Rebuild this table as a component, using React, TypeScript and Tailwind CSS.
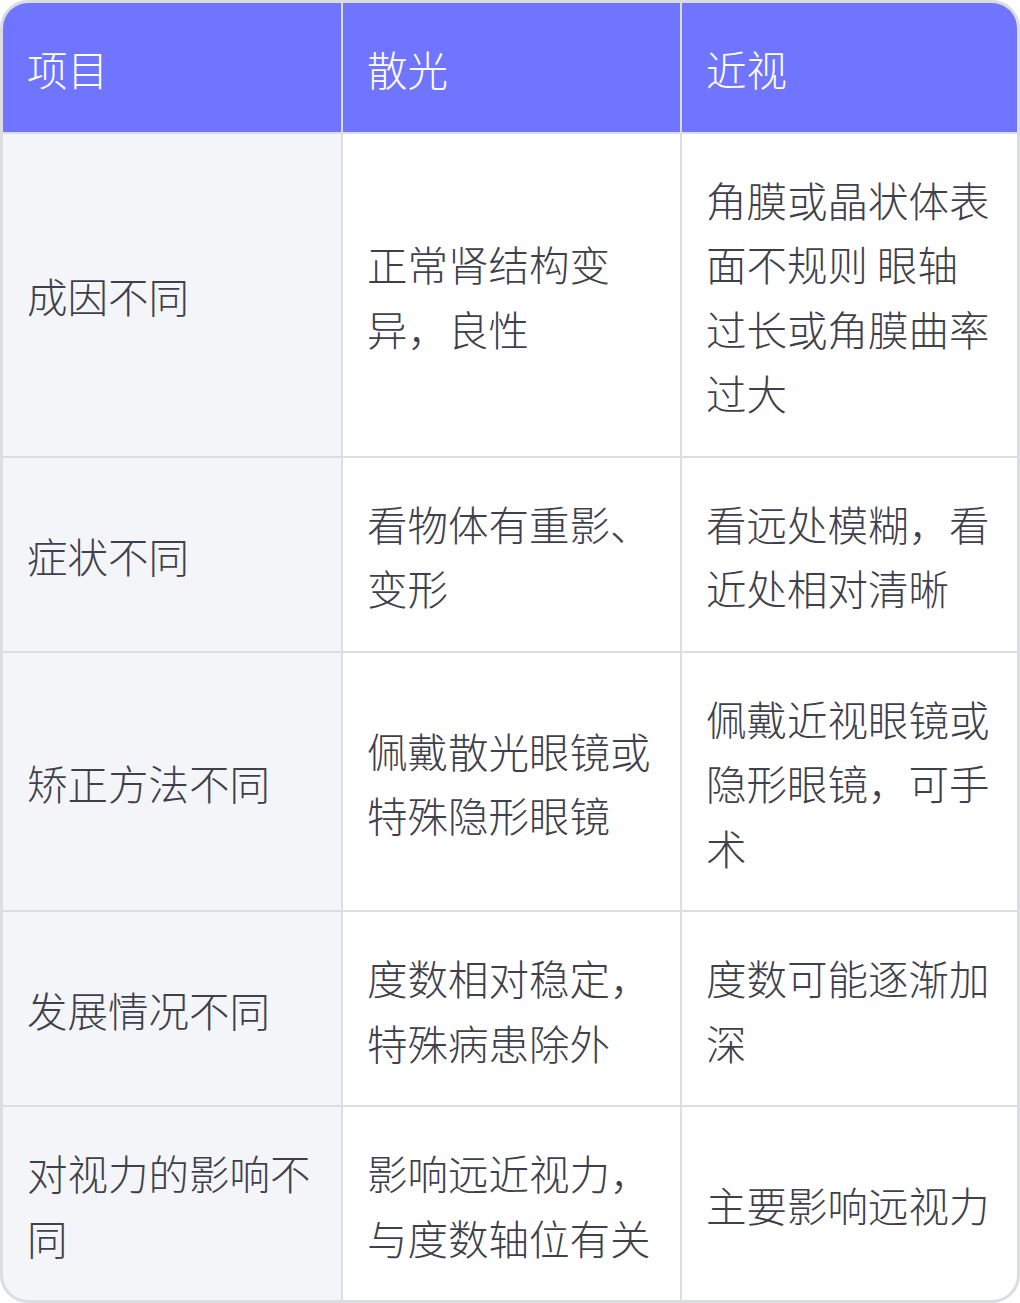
// 散光 vs 近视 comparison table
const head = ['项目', '散光', '近视']

const rows = [
  ['成因不同', '正常肾结构变异，良性', '角膜或晶状体表面不规则 眼轴过长或角膜曲率过大'],
  ['症状不同', '看物体有重影、变形', '看远处模糊，看近处相对清晰'],
  ['矫正方法不同', '佩戴散光眼镜或特殊隐形眼镜', '佩戴近视眼镜或隐形眼镜，可手术'],
  ['发展情况不同', '度数相对稳定，特殊病患除外', '度数可能逐渐加深'],
  ['对视力的影响不同', '影响远近视力，与度数轴位有关', '主要影响远视力'],
]

export default function App() {
  return (
    <main
      className="w-[1020px] h-[1303px] bg-white"
      style={{ fontFamily: '"Noto Sans CJK SC", "Noto Sans", sans-serif' }}
    >
      {/* table */}
      <div className="w-full h-full grid grid-cols-[338fr_337fr_335fr] gap-[2px] bg-[#dcdde3] border-[3px] border-[#dcdde3] rounded-[28px] overflow-hidden text-[40.5px] leading-[64.5px] font-light">

        {/* header */}
        {head.map((h) => (
          <div key={h} className="bg-[#7075ff] text-white px-6 pt-[34px] pb-[30px] flex items-center">
            {h}
          </div>
        ))}

        {/* body */}
        {rows.map((row) =>
          row.map((cell, idx) => (
            <div
              key={row[0] + idx}
              className={
                (idx === 0 ? 'bg-[#f4f5f9]' : 'bg-white') +
                ' text-[#3e404b] px-6 pt-[34px] pb-[30px] flex items-center'
              }
            >
              <span>{cell}</span>
            </div>
          ))
        )}
      </div>
    </main>
  )
}
